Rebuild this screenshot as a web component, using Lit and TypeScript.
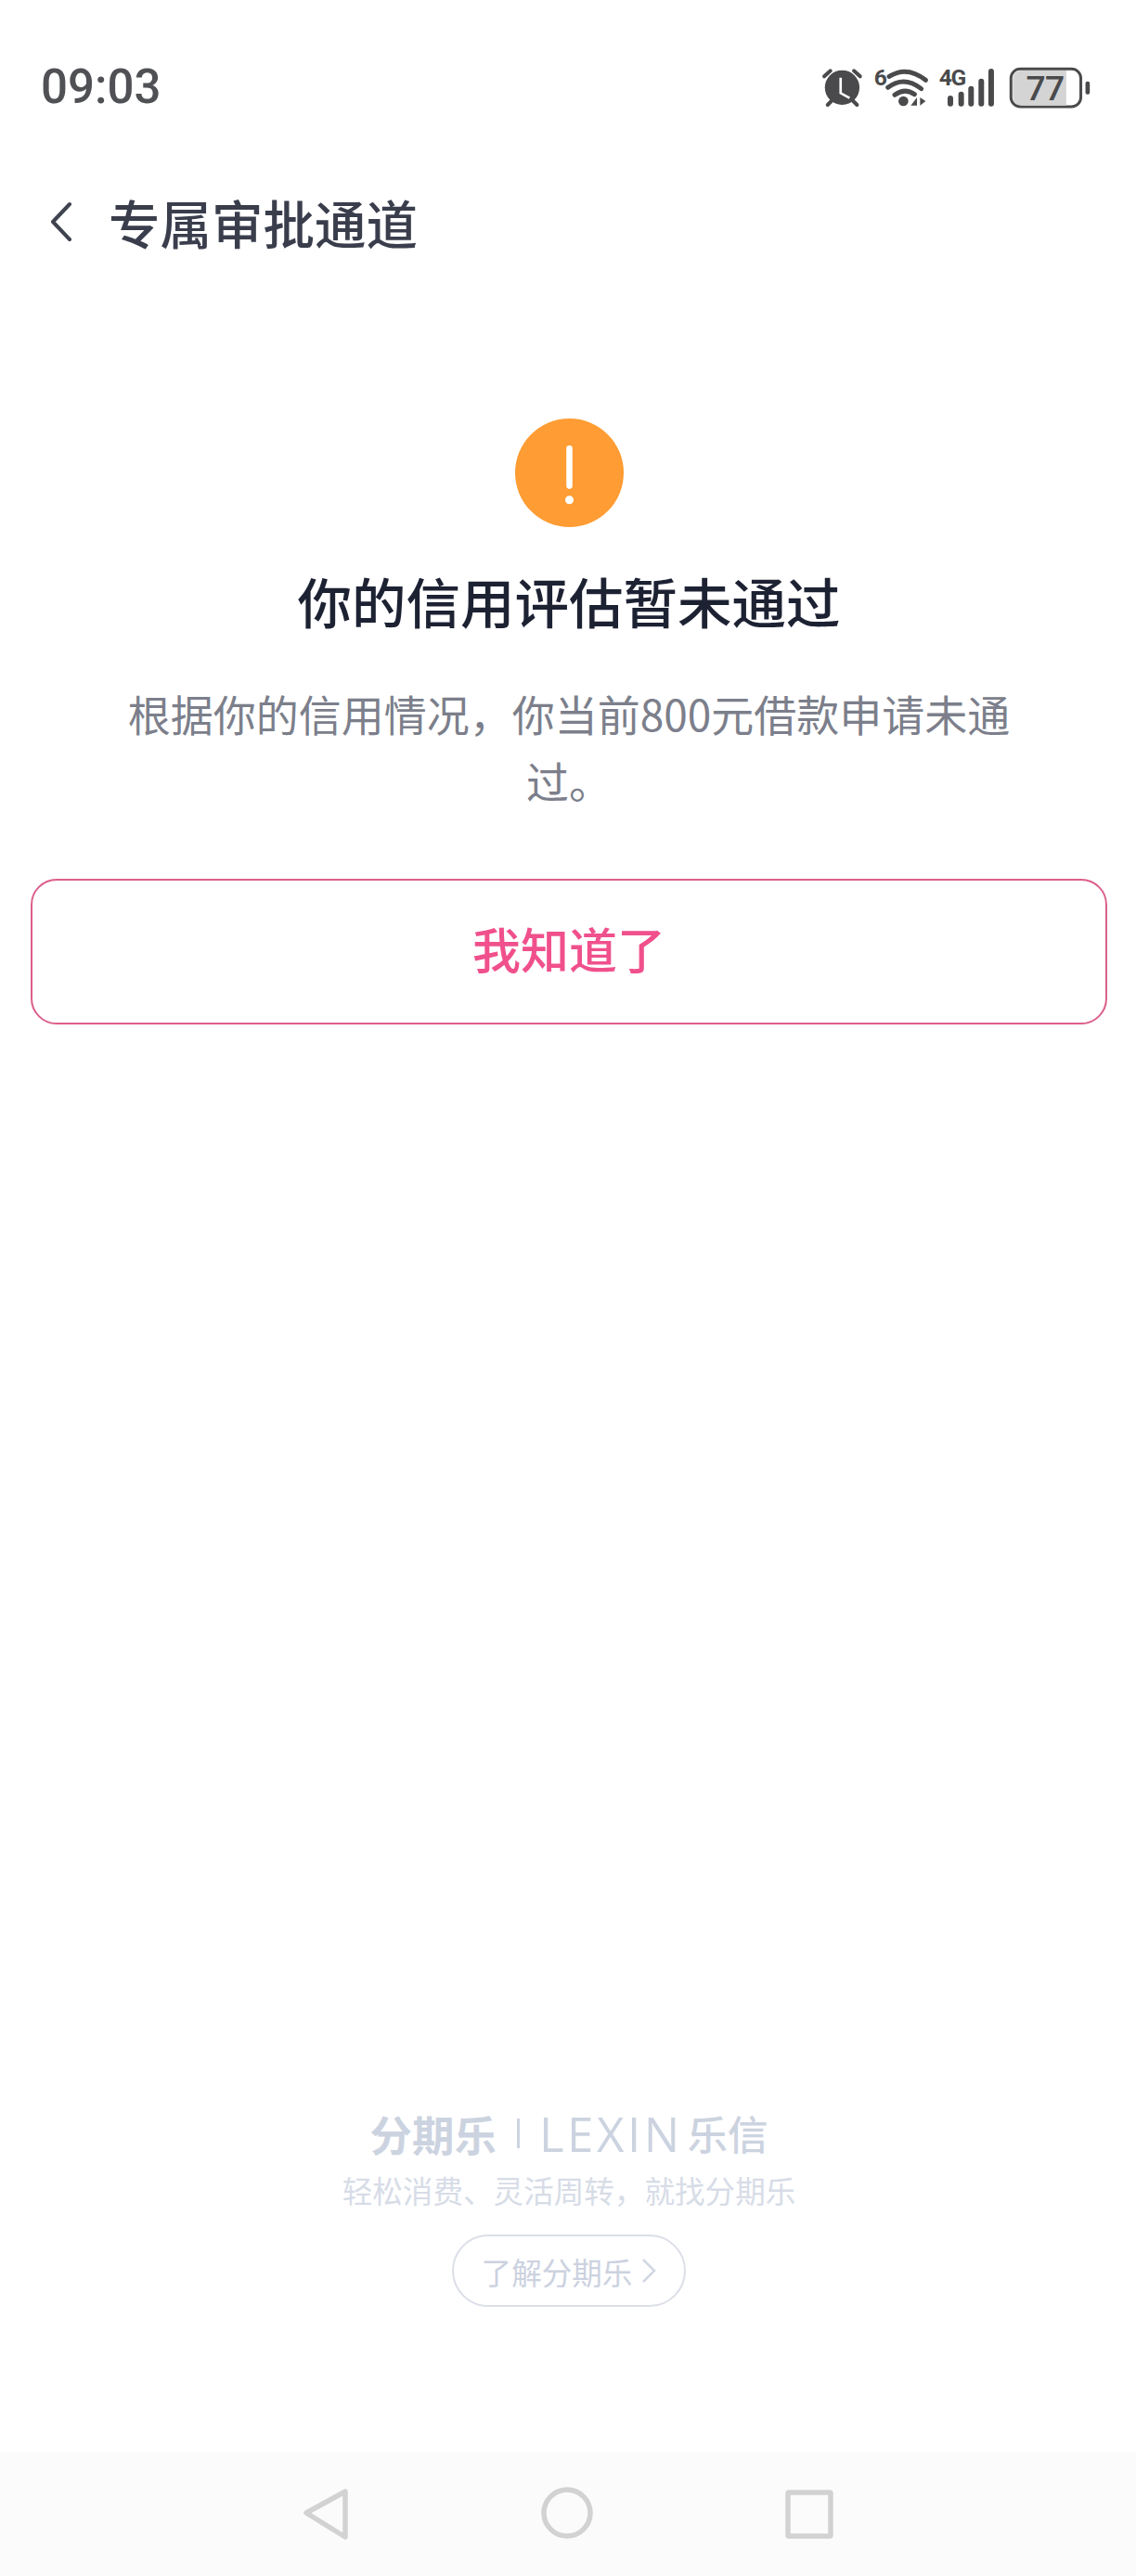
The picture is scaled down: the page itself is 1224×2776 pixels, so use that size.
import { LitElement, html, css } from "lit";
import { customElement } from "lit/decorators.js";

@customElement("app-root")
export class AppRoot extends LitElement {
  static styles = css`
    :host {
      display: flex;
      flex-direction: column;
      width: 1224px;
      height: 2776px;
      background: #fff;
      font-family: "Noto Sans CJK SC", "Noto Sans", sans-serif;
      overflow: hidden;
    }
    .status {
      height: 188px;
      flex: none;
      display: flex;
      align-items: center;
      justify-content: space-between;
      padding: 0 47px 0 44px;
      box-sizing: border-box;
    }
    .time {
      font-family: Roboto, sans-serif;
      font-size: 51px;
      font-weight: 500;
      color: #505155;
      line-height: 60px;
    }
    .status-icons {
      display: block;
    }
    .header {
      height: 102px;
      flex: none;
      display: flex;
      align-items: center;
      padding-left: 53px;
      padding-bottom: 2px;
      gap: 38px;
    }
    .header h1 {
      margin: 0;
      font-size: 55.5px;
      font-weight: 500;
      color: #3a3e4c;
      line-height: 70px;
    }
    .main {
      flex: 1;
      display: flex;
      flex-direction: column;
      align-items: center;
      padding: 159px 31px 0 33px;
    }
    .alert {
      display: block;
      width: 117px;
      height: 117px;
    }
    .title {
      margin: 39px 0 0;
      font-size: 58.5px;
      line-height: 80px;
      font-weight: 500;
      color: #1d2233;
    }
    .desc {
      margin: 45px 0 0;
      width: 960px;
      text-align: center;
      font-size: 46px;
      line-height: 72px;
      color: #7c7f8b;
    }
    .btn {
      margin-top: 71px;
      width: 1160px;
      height: 157px;
      box-sizing: border-box;
      border: 2px solid #dc5f8d;
      border-radius: 28px;
      display: flex;
      align-items: center;
      justify-content: center;
      padding-bottom: 8px;
      font-size: 52px;
      font-weight: 500;
      color: #f0508c;
    }
    .footer {
      flex: none;
      display: flex;
      flex-direction: column;
      align-items: center;
      padding: 0 0 157px 2px;
    }
    .logo {
      display: flex;
      align-items: center;
      height: 60px;
      color: #ccd3e0;
      font-size: 45.5px;
      line-height: 60px;
    }
    .logo-cn {
      font-weight: 700;
    }
    .logo-bar {
      width: 3px;
      height: 32px;
      background: #ccd3e0;
      margin: 0 21px 0 22px;
    }
    .logo-en {
      font-family: "Open Sans", sans-serif;
      font-weight: 400;
      font-size: 51px;
      letter-spacing: 3.5px;
      margin-right: 5px;
    }
    .logo-le {
      font-size: 43.5px;
      font-weight: 500;
    }
    .sub {
      margin-top: 9px;
      font-size: 32.6px;
      line-height: 44px;
      color: #d7dce7;
    }
    .pill {
      margin-top: 26px;
      width: 252px;
      height: 78px;
      box-sizing: border-box;
      border: 2px solid #dcdfe8;
      border-radius: 39px;
      display: flex;
      align-items: center;
      justify-content: center;
      gap: 10px;
      font-size: 32.6px;
      color: #ccd2df;
    }
    .nav {
      flex: none;
      height: 133px;
      background: #fbfbfb;
      display: block;
    }
    svg {
      display: block;
      flex: none;
    }
  `;

  render() {
    return html`
      <div class="status">
        <span class="time">09:03</span>
        <svg class="status-icons" width="293.3" height="48.3" viewBox="70 55 880 145">
          <g fill="none" stroke="#4a4a4c" stroke-linecap="round">
            <path d="M82 92 L102 74 M178 74 L198 92 M93 184 L105 172 M188 184 L176 172" stroke-width="12" />
          </g>
          <circle cx="140" cy="128" r="56" fill="#4a4a4c" />
          <path d="M135 96 V146 L164 162" fill="none" stroke="#fff" stroke-width="8" />
          <text x="243" y="120" font-family="Roboto, sans-serif" font-weight="700" font-size="74" fill="#4a4a4c">6</text>
          <g fill="none" stroke="#4a4a4c" stroke-width="15" stroke-linecap="round">
            <path d="M292 92 Q350 56 410 104" />
            <path d="M288 128 Q340 88 396 132" />
            <path d="M310 152 Q342 128 374 150" />
          </g>
          <circle cx="338" cy="172" r="16" fill="#4a4a4c" />
          <path d="M362 186 L382 160 V186 Z M392 160 L410 172 L392 186 Z" fill="#4a4a4c" />
          <text x="453" y="122" font-family="Roboto, sans-serif" font-weight="700" font-size="74" letter-spacing="-4" fill="#4a4a4c">4G</text>
          <g stroke="#4a4a4c" stroke-width="18" stroke-linecap="round">
            <path d="M490 163 V180 M525 150 V180 M557 132 V180 M590 108 V180 M622 76 V180" />
          </g>
          <rect x="686" y="68" width="226" height="122" rx="30" fill="#fff" stroke="#4a4a4c" stroke-width="9" />
          <path d="M692 103 Q692 73 722 73 H865 V186 H722 Q692 186 692 156 Z" fill="#d4d4d4" />
          <text x="735" y="170" font-family="Roboto, sans-serif" font-weight="500" font-size="112" letter-spacing="-2" fill="#4a4a4c">77</text>
          <rect x="927" y="108" width="14" height="42" rx="6" fill="#4a4a4c" />
        </svg>
      </div>
      <div class="header">
        <svg width="26" height="44" viewBox="0 0 26 44">
          <path d="M22 3 L4 22 L22 41" fill="none" stroke="#3f4350" stroke-width="4" stroke-linecap="round" stroke-linejoin="round" />
        </svg>
        <h1>专属审批通道</h1>
      </div>
      <div class="main">
        <svg class="alert" viewBox="0 0 116 116">
          <circle cx="58" cy="58" r="58" fill="#ff9c33" />
          <path d="M58 32 V72" stroke="#fff" stroke-width="6.5" stroke-linecap="round" />
          <circle cx="58" cy="87" r="4.5" fill="#fff" />
        </svg>
        <div class="title">你的信用评估暂未通过</div>
        <div class="desc">根据你的信用情况，你当前800元借款申请未通过。</div>
        <div class="btn">我知道了</div>
      </div>
      <div class="footer">
        <div class="logo">
          <span class="logo-cn">分期乐</span>
          <span class="logo-bar"></span>
          <span class="logo-en">LEXIN</span>
          <span class="logo-le">乐信</span>
        </div>
        <div class="sub">轻松消费、灵活周转，就找分期乐</div>
        <div class="pill">
          <span>了解分期乐</span>
          <svg width="16" height="28" viewBox="0 0 16 28">
            <path d="M2 2 L14 14 L2 26" fill="none" stroke="#d2d7e3" stroke-width="2.5" />
          </svg>
        </div>
      </div>
      <svg class="nav" width="1224" height="133" viewBox="0 2643 1224 133">
        <path d="M372 2685 V2734 L330 2708 Z" fill="none" stroke="#d2d2d2" stroke-width="5.5" stroke-linejoin="round" />
        <circle cx="611" cy="2708" r="25" fill="none" stroke="#d2d2d2" stroke-width="5.5" />
        <rect x="849" y="2686" width="46" height="47" rx="1" fill="none" stroke="#d2d2d2" stroke-width="5.5" />
      </svg>
    `;
  }
}
